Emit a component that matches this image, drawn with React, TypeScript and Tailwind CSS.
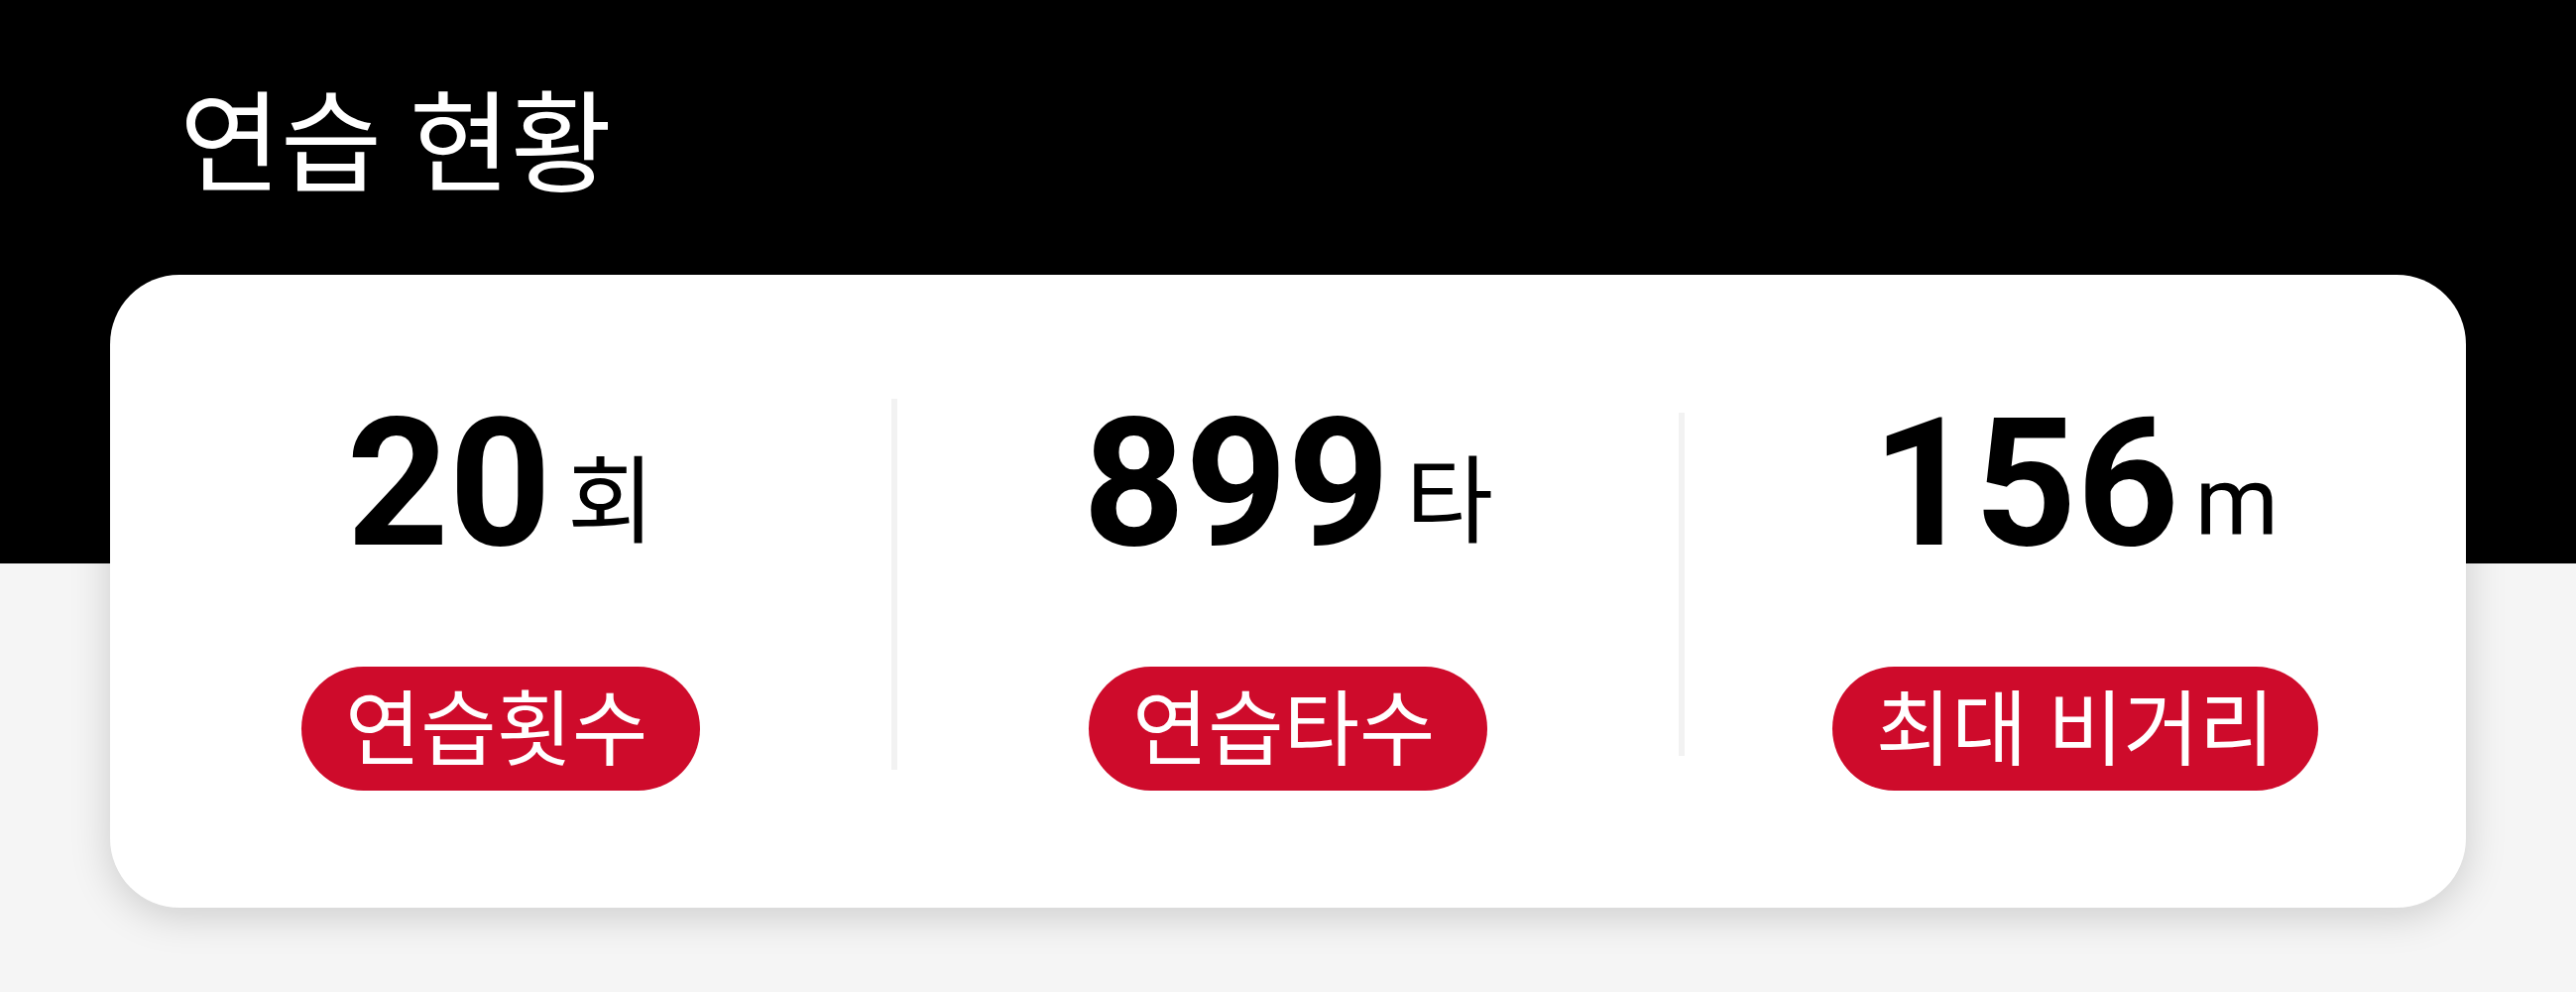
const font = "font-['Roboto','Noto_Sans_CJK_KR',sans-serif]";

interface Stat {
  value: number;
  unit: string;
  label: string;
}

const stats: Stat[] = [
  { value: 20, unit: '회', label: '연습횟수' },
  { value: 899, unit: '타', label: '연습타수' },
  { value: 156, unit: 'm', label: '최대 비거리' },
];

function StatItem({ stat }: { stat: Stat }) {
  return (
    <div className="flex flex-1 flex-col items-center">
      <p className="flex items-end gap-4 leading-none">
        <span className="text-[180px] font-bold">{stat.value}</span>
        <span className="pb-6 text-[96px]">{stat.unit}</span>
      </p>
      <span className="mt-[94px] flex h-[125px] min-w-[402px] items-center rounded-full bg-[#ce0b2b] px-[44px] pt-1 text-[83px] leading-none text-white">
        {stat.label}
      </span>
    </div>
  );
}

export default function App() {
  return (
    <div className={`min-h-screen bg-[linear-gradient(#000_568px,#f5f5f5_568px)] px-[111px] pb-20 text-black ${font}`}>
      <h1 className="px-[70px] pt-[83px] text-[111px] leading-[128px] text-white">연습 현황</h1>
      <section className="mt-[66px] flex rounded-[70px] bg-white pt-[121px] pb-[118px] shadow-[0_8px_40px_rgba(0,0,0,0.17)]">
        <StatItem stat={stats[0]} />
        <div className="mt-1 h-[374px] w-[6px] bg-[#f2f2f2]" />
        <StatItem stat={stats[1]} />
        <div className="mt-[18px] h-[346px] w-[6px] bg-[#f2f2f2]" />
        <StatItem stat={stats[2]} />
      </section>
    </div>
  );
}
